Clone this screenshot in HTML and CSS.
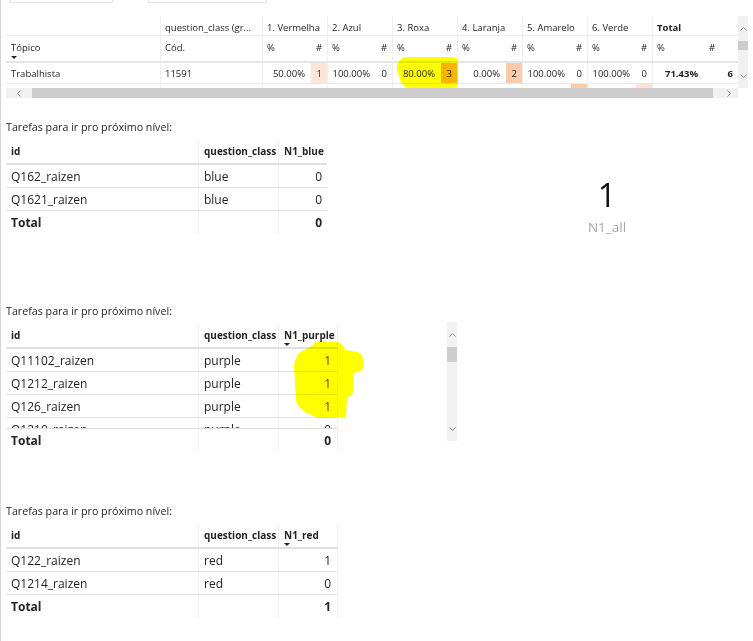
FILE: index.html
```html
<!DOCTYPE html>
<html lang="pt">
<head>
<meta charset="utf-8">
<title>Relatório</title>
<link rel="stylesheet" href="styles.css">
</head>
<body>
<div class="page">
  <div class="slicers">
    <div class="slicer s1"></div>
    <div class="slicer s2"></div>
  </div>

  <div class="matrix">
    <div class="matrix-main">
      <div class="mgrid">
        <div class="mc r1"></div>
        <div class="mc r1 g">question_class (gr...</div>
        <div class="mc r1 g span2">1. Vermelha</div>
        <div class="mc r1 g span2">2. Azul</div>
        <div class="mc r1 g span2">3. Roxa</div>
        <div class="mc r1 g span2">4. Laranja</div>
        <div class="mc r1 g span2">5. Amarelo</div>
        <div class="mc r1 g span2">6. Verde</div>
        <div class="mc r1 g span2 bold">Total</div>

        <div class="mc r2"><div>Tópico</div><div class="sort-arrow"></div></div>
        <div class="mc r2 g">Cód.</div>
        <div class="mc r2 g">%</div><div class="mc r2">#</div>
        <div class="mc r2 g">%</div><div class="mc r2">#</div>
        <div class="mc r2 g">%</div><div class="mc r2">#</div>
        <div class="mc r2 g">%</div><div class="mc r2">#</div>
        <div class="mc r2 g">%</div><div class="mc r2">#</div>
        <div class="mc r2 g">%</div><div class="mc r2">#</div>
        <div class="mc r2 g">%</div><div class="mc r2">#</div>

        <div class="mc r3 l">Trabalhista</div>
        <div class="mc r3 l g">11591</div>
        <div class="mc r3 g">50.00%</div><div class="mc r3 n peach1">1</div>
        <div class="mc r3 g">100.00%</div><div class="mc r3 n">0</div>
        <div class="mc r3 g">80.00%</div><div class="mc r3 n peach3">3</div>
        <div class="mc r3 g">0.00%</div><div class="mc r3 n peach2">2</div>
        <div class="mc r3 g">100.00%</div><div class="mc r3 n">0</div>
        <div class="mc r3 g">100.00%</div><div class="mc r3 n">0</div>
        <div class="mc r3 g bold">71.43%</div><div class="mc r3 n bold">6</div>

        <div class="mc r4"></div>
        <div class="mc r4 g"></div>
        <div class="mc r4 g"></div><div class="mc r4"></div>
        <div class="mc r4 g"></div><div class="mc r4"></div>
        <div class="mc r4 g"></div><div class="mc r4"></div>
        <div class="mc r4 g"></div><div class="mc r4"></div>
        <div class="mc r4 g"></div><div class="mc r4 peach2"></div>
        <div class="mc r4 g"></div><div class="mc r4 peach1"></div>
        <div class="mc r4 g"></div><div class="mc r4"></div>
      </div>
      <div class="vscroll vs-matrix">
        <div class="vs-up"><svg width="7" height="4" viewBox="0 0 7 4"><path d="M0.5 3.5 L3.5 0.5 L6.5 3.5" fill="none" stroke="#8a8a8a" stroke-width="1"/></svg></div>
        <div class="vs-thumb"></div>
        <div class="vs-fill"></div>
        <div class="vs-down"><svg width="7" height="4" viewBox="0 0 7 4"><path d="M0.5 0.5 L3.5 3.5 L6.5 0.5" fill="none" stroke="#8a8a8a" stroke-width="1"/></svg></div>
      </div>
    </div>
    <div class="hscroll">
      <div class="hs-left"><svg width="4" height="7" viewBox="0 0 4 7"><path d="M3.5 0.5 L0.5 3.5 L3.5 6.5" fill="none" stroke="#8a8a8a" stroke-width="1"/></svg></div>
      <div class="hs-thumb"></div>
      <div class="hs-fill"></div>
      <div class="hs-right"><svg width="4" height="7" viewBox="0 0 4 7"><path d="M0.5 0.5 L3.5 3.5 L0.5 6.5" fill="none" stroke="#8a8a8a" stroke-width="1"/></svg></div>
    </div>
  </div>

  <div class="row2">
    <section class="visual v-blue">
      <div class="vtitle">Tarefas para ir pro próximo nível:</div>
      <div class="tgrid">
        <div class="h">id</div><div class="h c2">question_class</div><div class="h c3">N1_blue</div>
        <div class="d">Q162_raizen</div><div class="d c2">blue</div><div class="d c3 num">0</div>
        <div class="d">Q1621_raizen</div><div class="d c2">blue</div><div class="d c3 num">0</div>
        <div class="t">Total</div><div class="t c2"></div><div class="t c3 num">0</div>
      </div>
    </section>
    <div class="card">
      <div class="card-value">1</div>
      <div class="card-label">N1_all</div>
    </div>
  </div>

  <section class="visual v-purple">
    <div class="vtitle">Tarefas para ir pro próximo nível:</div>
    <div class="tbl-wrap">
      <div class="tbl">
        <div class="tgrid">
          <div class="h">id</div><div class="h c2">question_class</div><div class="h c3"><div>N1_purple</div><div class="sort-arrow"></div></div>
        </div>
        <div class="tview">
          <div class="tgrid">
            <div class="d">Q11102_raizen</div><div class="d c2">purple</div><div class="d c3 num red">1</div>
            <div class="d">Q1212_raizen</div><div class="d c2">purple</div><div class="d c3 num red">1</div>
            <div class="d">Q126_raizen</div><div class="d c2">purple</div><div class="d c3 num red">1</div>
            <div class="d">Q1210_raizen</div><div class="d c2">purple</div><div class="d c3 num">0</div>
          </div>
        </div>
        <div class="tgrid">
          <div class="t top">Total</div><div class="t top c2"></div><div class="t top c3 num">0</div>
        </div>
      </div>
      <div class="vscroll vs-table">
        <div class="vs-up"><svg width="7" height="4" viewBox="0 0 7 4"><path d="M0.5 3.5 L3.5 0.5 L6.5 3.5" fill="none" stroke="#8a8a8a" stroke-width="1"/></svg></div>
        <div class="vs-thumb"></div>
        <div class="vs-fill"></div>
        <div class="vs-down"><svg width="7" height="4" viewBox="0 0 7 4"><path d="M0.5 0.5 L3.5 3.5 L6.5 0.5" fill="none" stroke="#8a8a8a" stroke-width="1"/></svg></div>
      </div>
    </div>
  </section>

  <section class="visual v-red">
    <div class="vtitle">Tarefas para ir pro próximo nível:</div>
    <div class="tgrid">
      <div class="h">id</div><div class="h c2">question_class</div><div class="h c3"><div>N1_red</div><div class="sort-arrow"></div></div>
      <div class="d">Q122_raizen</div><div class="d c2">red</div><div class="d c3 num">1</div>
      <div class="d">Q1214_raizen</div><div class="d c2">red</div><div class="d c3 num">0</div>
      <div class="t">Total</div><div class="t c2"></div><div class="t c3 num">1</div>
    </div>
  </section>
</div>

<svg class="highlight" width="753" height="641" viewBox="0 0 753 641" aria-hidden="true">
  <path d="M404 57 L452 57 Q458 57 458 62 L458 83 Q458 88 452 88 L410 88 Q402 87 400 80 L397 70 Q396 61 404 57 Z" fill="#ffff00"/>
  <path d="M315 342 L338 342 Q344 344 345 350 L358 352 Q363 354 363 360 L363 368 Q362 372 353 373 L353 392 Q352 396 347 397 L346 417 L320 418 Q300 413 296 401 L294 366 Q295 354 304 350 Q312 347 315 342 Z" fill="#ffff00"/>
</svg>
</body>
</html>
```

FILE: styles.css
```css
html, body {
  margin: 0;
  background: #ffffff;
}

body {
  position: relative;
  font-family: "Open Sans", "Noto Sans", sans-serif;
  color: #252423;
  min-height: 641px;
}

.page {
  border-left: 1px solid #d4d4d4;
  min-height: 641px;
  box-sizing: border-box;
  overflow: hidden;
}

/* slicers cut off at top */
.slicers {
  display: flex;
  gap: 35px;
  padding-left: 9px;
}

.slicer {
  height: 3px;
  box-sizing: border-box;
  border: 1px solid #e3e3e3;
  border-top: none;
}

.s1 { width: 103px; }
.s2 { width: 119px; }

/* matrix */
.matrix {
  margin: 13px 0 0 5px;
  width: 742px;
}

.matrix-main {
  display: flex;
}

.mgrid {
  display: grid;
  grid-template-columns: 154px 102px repeat(6, 49px 16px) 52px 34px;
  grid-template-rows: 20px 27px 21px 4px;
  width: 732px;
  height: 72px;
  overflow: hidden;
  font-size: 9.5px;
}

.mc {
  box-sizing: border-box;
  padding: 5px 5px 0 5px;
  line-height: 14px;
  white-space: nowrap;
  overflow: hidden;
}

.span2 { grid-column: span 2; }
.bold { font-weight: 700; }

.g { border-left: 1px solid #eeeeee; padding-left: 4px; }

.r1 { border-bottom: 1px solid #e9e9e9; }
.r2 { border-bottom: 2px solid #e6e6e6; }

.r3 {
  padding-top: 1px;
  line-height: 20px;
  border-bottom: 1px solid #e9e9e9;
  text-align: right;
  padding-right: 6px;
}

.r3.l { text-align: left; }
.r3.n { padding-right: 5px; padding-left: 0; }

.r4 { padding: 0; }

.peach1 { background: #fce4d6; }
.peach2 { background: #f8cbad; }
.peach3 { background: #f5b496; }

.sort-arrow {
  width: 0;
  height: 0;
  margin-top: 1px;
  border-left: 3px solid transparent;
  border-right: 3px solid transparent;
  border-top: 3px solid #252423;
}

/* scrollbars */
.vscroll {
  display: flex;
  flex-direction: column;
  width: 10px;
  background: #f1f1f1;
}

.vs-matrix { height: 72px; }

.vs-up {
  height: 25px;
  display: flex;
  align-items: center;
  justify-content: center;
}

.vs-down {
  height: 24px;
  display: flex;
  align-items: center;
  justify-content: center;
}

.vs-thumb {
  height: 9px;
  background: #cdcdcd;
}

.vs-fill { flex: 1; }

.vs-table {
  height: 119px;
  margin-left: 109px;
  margin-top: -2px;
}

.vs-table .vs-thumb { height: 15px; }

.hscroll {
  display: flex;
  width: 732px;
  height: 10px;
  background: #f1f1f1;
}

.hs-left {
  width: 26px;
  display: flex;
  align-items: center;
  justify-content: center;
}

.hs-thumb {
  width: 681px;
  background: #cdcdcd;
}

.hs-fill { flex: 1; }

.hs-right {
  width: 18px;
  display: flex;
  align-items: center;
  justify-content: center;
}

/* table visuals */
.row2 {
  display: flex;
  margin-top: 21px;
}

.visual {
  margin-left: 5px;
}

.vtitle {
  font-size: 10.7px;
  line-height: 16px;
  height: 16px;
  margin-bottom: 5px;
  white-space: nowrap;
  color: #252423;
}

.v-blue { --cols: 192px 80px 49px; width: 321px; }
.v-purple { --cols: 192px 80px 60px; margin-top: 68px; }
.v-red { --cols: 192px 80px 60px; margin-top: 52px; }

.tgrid {
  display: grid;
  grid-template-columns: var(--cols);
}

.h, .d, .t {
  box-sizing: border-box;
  white-space: nowrap;
  overflow: hidden;
  padding: 0 5px;
}

.h {
  height: 25px;
  padding-top: 4px;
  border-bottom: 2px solid #e1dfdd;
  font-size: 10px;
  font-weight: 700;
  line-height: 14px;
}

.d {
  height: 23px;
  padding-top: 1px;
  border-bottom: 1px solid #e6e4e2;
  font-size: 12px;
  line-height: 22px;
}

.t {
  height: 23px;
  padding-top: 1px;
  font-size: 12px;
  font-weight: 700;
  line-height: 22px;
}

.t.top {
  border-top: 1px solid #e1dfdd;
  line-height: 21px;
}

.c2 { border-left: 1px solid #f0efee; }
.c3 { border-left: 1px solid #f0efee; }

.v-purple .c3, .v-red .c3 {
  border-right: 1px solid #f0efee;
  padding-right: 6px;
}

.num { text-align: right; }
.red { color: #8e1b1b; }

.tbl-wrap {
  display: flex;
  align-items: flex-start;
}

.tview {
  height: 79px;
  overflow: hidden;
}

/* card */
.card {
  width: 280px;
  margin-left: 140px;
  padding-top: 57px;
  text-align: center;
}

.card-value {
  font-family: "Open Sans", "Noto Sans", sans-serif;
  font-size: 32px;
  line-height: 37px;
  color: #111111;
}

.card-label {
  margin-top: 6px;
  font-size: 13.5px;
  line-height: 16px;
  color: #a9a5a3;
}

/* hand-drawn highlighter marks over the report */
.highlight {
  position: absolute;
  left: 0;
  top: 0;
  pointer-events: none;
  mix-blend-mode: multiply;
}
```
